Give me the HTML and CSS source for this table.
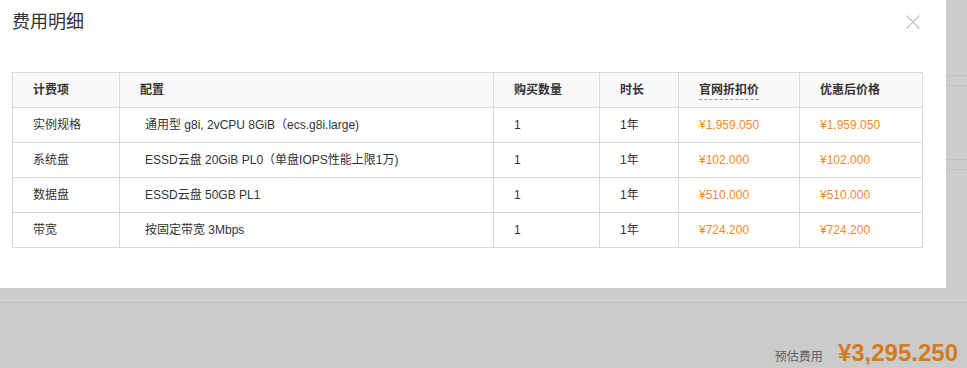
FILE: index.html
```html
<!DOCTYPE html>
<html lang="zh-CN">
<head>
<meta charset="utf-8">
<title>费用明细</title>
<link rel="stylesheet" href="styles.css">
</head>
<body>
<div class="page">
  <div class="page-main">
    <div class="bg-rule"></div>
    <div class="bg-rule bg-rule-2"></div>
  </div>
  <div class="page-footer">
    <span class="sum-label">预估费用</span>
    <span class="sum-price">¥3,295.250</span>
  </div>
</div>

<div class="modal">
  <div class="modal-head">
    <h2 class="modal-title">费用明细</h2>
    <span class="modal-close" aria-label="关闭">
      <svg width="16" height="16" viewBox="0 0 16 16"><path d="M1.5 1.5 L14.5 14.5 M14.5 1.5 L1.5 14.5" stroke="#c2c2c2" stroke-width="1.2" fill="none"/></svg>
    </span>
  </div>
  <table class="fee-table">
    <colgroup>
      <col class="c1"><col class="c2"><col class="c3"><col class="c4"><col class="c5"><col class="c6">
    </colgroup>
    <thead>
      <tr>
        <th>计费项</th>
        <th>配置</th>
        <th>购买数量</th>
        <th>时长</th>
        <th><span class="dashed">官网折扣价</span></th>
        <th>优惠后价格</th>
      </tr>
    </thead>
    <tbody>
      <tr>
        <td>实例规格</td>
        <td class="conf">通用型 g8i, 2vCPU 8GiB（ecs.g8i.large)</td>
        <td>1</td>
        <td>1年</td>
        <td class="price">¥1,959.050</td>
        <td class="price">¥1,959.050</td>
      </tr>
      <tr>
        <td>系统盘</td>
        <td class="conf">ESSD云盘 20GiB PL0（单盘IOPS性能上限1万)</td>
        <td>1</td>
        <td>1年</td>
        <td class="price">¥102.000</td>
        <td class="price">¥102.000</td>
      </tr>
      <tr>
        <td>数据盘</td>
        <td class="conf">ESSD云盘 50GB PL1</td>
        <td>1</td>
        <td>1年</td>
        <td class="price">¥510.000</td>
        <td class="price">¥510.000</td>
      </tr>
      <tr>
        <td>带宽</td>
        <td class="conf">按固定带宽 3Mbps</td>
        <td>1</td>
        <td>1年</td>
        <td class="price">¥724.200</td>
        <td class="price">¥724.200</td>
      </tr>
    </tbody>
  </table>
</div>
</body>
</html>
```

FILE: styles.css
```css
* { box-sizing: border-box; }

html, body {
  margin: 0;
  padding: 0;
}

body {
  width: 967px;
  height: 368px;
  overflow: hidden;
  background: #cccccc;
  font-family: "Liberation Sans", "Noto Sans CJK SC", Arial, sans-serif;
  font-size: 12px;
  color: #333;
  position: relative;
}

.page {
  display: flex;
  flex-direction: column;
  height: 368px;
}

.page-main {
  height: 302px;
  padding-top: 75px;
  background: #cdcdcd;
}

.bg-rule {
  height: 11px;
  border-top: 1px solid #c2c2c2;
  border-bottom: 1px solid #c2c2c2;
}

.bg-rule-2 {
  margin-top: 73px;
}

.page-footer {
  flex: 1;
  border-top: 1px solid #bdbdbd;
  background: #cbcbcb;
  display: flex;
  justify-content: flex-end;
  align-items: baseline;
  padding: 38px 9px 0 0;
}

.sum-label {
  font-family: "Noto Sans CJK SC", sans-serif;
  font-size: 12px;
  color: #5f5f5f;
  margin-right: 15px;
}

.sum-price {
  font-family: "Liberation Sans", Arial, sans-serif;
  font-size: 24px;
  line-height: 24px;
  font-weight: bold;
  color: #d47b1c;
}

/* dialog over the page */
.modal {
  position: absolute;
  top: 0;
  left: 0;
  width: 946px;
  height: 288px;
  background: #fff;
  padding: 0 25px 0 12px;
}

.modal-head {
  display: flex;
  justify-content: space-between;
  align-items: center;
  height: 40px;
}

.modal-title {
  margin: 0;
  font-family: "Noto Sans CJK SC", sans-serif;
  font-size: 18px;
  font-weight: normal;
  line-height: 40px;
  color: #333;
}

.modal-close {
  display: flex;
  width: 16px;
  height: 16px;
  margin-top: 3px;
}

.fee-table {
  margin-top: 32px;
  width: 910px;
  border-collapse: collapse;
  table-layout: fixed;
  border: 1px solid #d9d9d9;
}

.c1 { width: 107px; }
.c2 { width: 374px; }
.c3 { width: 106px; }
.c4 { width: 79px; }
.c5 { width: 121px; }
.c6 { width: 123px; }

.fee-table th,
.fee-table td {
  height: 35px;
  padding: 0 0 0 20px;
  border: 1px solid #d9d9d9;
  text-align: left;
  white-space: nowrap;
  line-height: 16px;
}

.fee-table th {
  background: #f9f9f9;
  font-weight: bold;
  color: #333;
}

.fee-table td.conf {
  padding-left: 25px;
}

.fee-table td.price {
  color: #f38a22;
}

.dashed {
  border-bottom: 1px dashed #999;
  padding-bottom: 2px;
}
```
